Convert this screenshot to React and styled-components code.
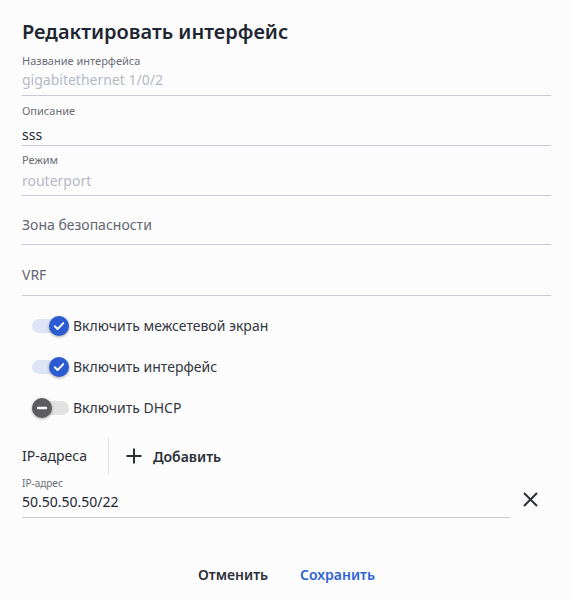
import React from 'react'
import styled, { createGlobalStyle } from 'styled-components';

const GlobalStyle = createGlobalStyle`
  html, body {
    margin: 0;
    padding: 0;
    background-color: #fcfcfd;
  }
  * {
    box-sizing: border-box;
  }
`;

//dialog and it`s parts
const Dialog = styled.div`
  width: 573px;
  height: 600px;
  padding: 18px 22px 0 22px;
  background-color: #fcfcfd;
  font-family: "Noto Sans", "Open Sans", sans-serif;
  display: flex;
  flex-direction: column;
`;

const Title = styled.h1`
  margin: 0;
  font-size: 20px;
  line-height: 27px;
  font-weight: 600;
  color: #1f2633;
`;

const Field = styled.div`
  display: flex;
  flex-direction: column;
  padding-top: ${p => p.$top}px;
  padding-bottom: ${p => p.$bottom}px;
  border-bottom: 1px solid #c8c9d5;
`;

const Label = styled.div`
  font-size: ${p => p.$small ? 10 : 11}px;
  line-height: ${p => p.$small ? 13 : 14}px;
  color: #6b6e78;
`;

const Value = styled.div`
  margin-top: ${p => p.$gap || 0}px;
  font-size: 14px;
  line-height: 20px;
  color: ${p => p.$color || '#1f2633'};
`;

const Toggles = styled.div`
  padding-top: 9px;
  display: flex;
  flex-direction: column;
`;

const ToggleRow = styled.label`
  height: 41px;
  padding-left: 10px;
  display: flex;
  align-items: center;
  font-size: 14px;
  color: #33363d;
`;

const Switch = styled.span`
  position: relative;
  width: 37px;
  height: 20px;
  margin-right: 4px;
  flex-shrink: 0;
`;

const Track = styled.span`
  position: absolute;
  left: 0;
  right: 0;
  top: 3px;
  height: 14px;
  border-radius: 7px;
  background-color: ${p => p.$on ? '#dde4f5' : '#e2e2e3'};
`;

const Knob = styled.span`
  position: absolute;
  top: 0;
  left: ${p => p.$on ? 17 : 0}px;
  width: 20px;
  height: 20px;
  border-radius: 50%;
  background-color: ${p => p.$on ? '#2a5bd0' : '#5c5c5e'};
  box-shadow: 0 1px 3px rgba(0, 0, 0, 0.35);
  display: flex;
  align-items: center;
  justify-content: center;
`;

const IpHeader = styled.div`
  margin-top: 10px;
  height: 36px;
  display: flex;
  align-items: center;
`;

const IpTitle = styled.div`
  font-size: 14px;
  color: #2b2f38;
  padding-right: 21px;
  height: 36px;
  line-height: 36px;
  border-right: 1px solid #e4e4e8;
`;

const AddButton = styled.button`
  margin-left: 9px;
  padding: 0 8px;
  height: 36px;
  display: flex;
  align-items: center;
  gap: 11px;
  border: none;
  background: none;
  font-family: inherit;
  font-size: 14px;
  font-weight: 600;
  color: #2b2f38;
  cursor: pointer;
`;

const IpRow = styled.div`
  display: flex;
  align-items: flex-start;
`;

const IpField = styled(Field)`
  flex: 1;
`;

const CloseButton = styled.button`
  margin-top: 5px;
  width: 41px;
  height: 40px;
  border: none;
  background: none;
  padding: 0;
  display: flex;
  align-items: center;
  justify-content: center;
  cursor: pointer;
`;

const Footer = styled.div`
  margin-top: 38px;
  display: flex;
  justify-content: center;
`;

const FooterButton = styled.button`
  padding: 8px 16px;
  border: none;
  background: none;
  font-family: inherit;
  font-size: 14px;
  line-height: 20px;
  font-weight: 600;
  color: ${p => p.$primary ? '#2f64d6' : '#2b2f38'};
  cursor: pointer;
`;

function Toggle({ on, children }) {
  return (
    <ToggleRow>
      <Switch>
        <Track $on={on} />
        <Knob $on={on}>
          {on ? (
            <svg width="12" height="12" viewBox="0 0 12 12">
              <path d="M1.8 6.3 L4.6 9 L10.3 3.1" fill="none" stroke="#fff" strokeWidth="1.9" strokeLinecap="round" strokeLinejoin="round" />
            </svg>
          ) : (
            <svg width="12" height="12" viewBox="0 0 12 12">
              <rect x="1" y="4.8" width="10" height="2.4" rx="0.6" fill="#fff" />
            </svg>
          )}
        </Knob>
      </Switch>
      {children}
    </ToggleRow>
  );
}

function App() {
  return (
    <>
      <GlobalStyle />
      <Dialog>
        <Title>Редактировать интерфейс</Title>

        <Field $top={9} $bottom={5}>
          <Label>Название интерфейса</Label>
          <Value $gap={2} $color="#b6b9c5">gigabitethernet 1/0/2</Value>
        </Field>
        <Field $top={8} $bottom={0}>
          <Label>Описание</Label>
          <Value $gap={7}>sss</Value>
        </Field>
        <Field $top={7} $bottom={4}>
          <Label>Режим</Label>
          <Value $gap={4} $color="#b6b9c5">routerport</Value>
        </Field>
        <Field $top={19} $bottom={9}>
          <Value $color="#636772">Зона безопасности</Value>
        </Field>
        <Field $top={20} $bottom={10}>
          <Value $color="#636772">VRF</Value>
        </Field>

        <Toggles>
          <Toggle on>Включить межсетевой экран</Toggle>
          <Toggle on>Включить интерфейс</Toggle>
          <Toggle>Включить DHCP</Toggle>
        </Toggles>

        <IpHeader>
          <IpTitle>IP-адреса</IpTitle>
          <AddButton>
            <svg width="16" height="16" viewBox="0 0 16 16">
              <path d="M8 0.5 V15.5 M0.5 8 H15.5" stroke="#2b2f38" strokeWidth="2" />
            </svg>
            Добавить
          </AddButton>
        </IpHeader>

        <IpRow>
          <IpField $top={3} $bottom={5}>
            <Label $small>IP-адрес</Label>
            <Value $gap={2}>50.50.50.50/22</Value>
          </IpField>
          <CloseButton>
            <svg width="15" height="15" viewBox="0 0 15 15">
              <path d="M1 1 L14 14 M14 1 L1 14" stroke="#2b2f38" strokeWidth="2" />
            </svg>
          </CloseButton>
        </IpRow>

        <Footer>
          <FooterButton>Отменить</FooterButton>
          <FooterButton $primary>Сохранить</FooterButton>
        </Footer>
      </Dialog>
    </>
  );
}

export default App;
